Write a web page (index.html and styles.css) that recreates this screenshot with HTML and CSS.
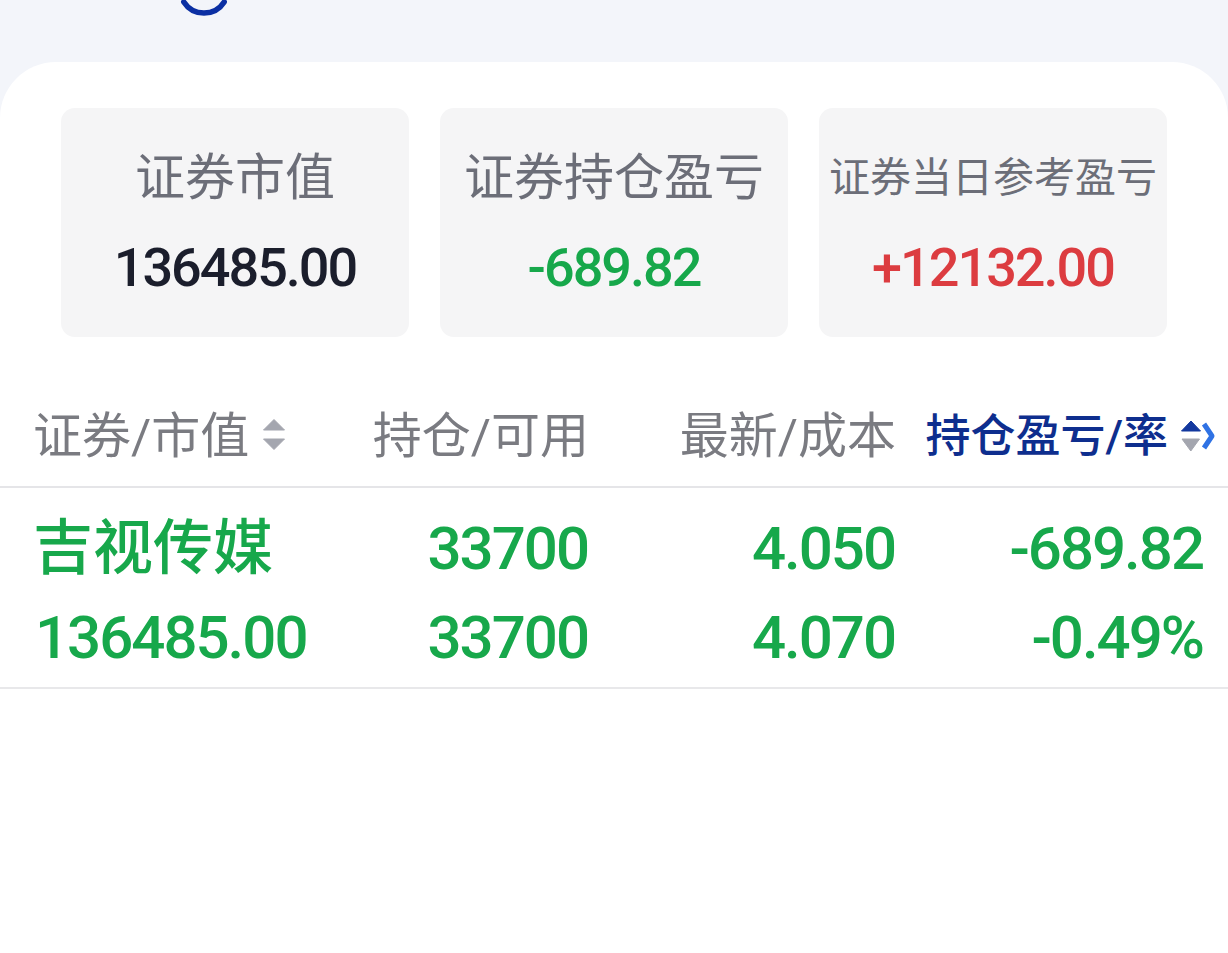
FILE: index.html
```html
<!DOCTYPE html>
<html lang="zh-CN">
<head>
<meta charset="utf-8">
<title>持仓</title>
<link rel="stylesheet" href="styles.css">
</head>
<body>
<header class="top">
  <svg class="top-arc" width="60" height="20" viewBox="0 0 60 20"><path d="M9.8 2 A24 24 0 0 0 50.2 2" fill="none" stroke="#0b2fa3" stroke-width="5.5" stroke-linecap="round"/></svg>
</header>
<main class="panel">
  <section class="stats">
    <div class="stat">
      <div class="stat-label">证券市值</div>
      <div class="stat-value">136485.00</div>
    </div>
    <div class="stat">
      <div class="stat-label">证券持仓盈亏</div>
      <div class="stat-value down">-689.82</div>
    </div>
    <div class="stat">
      <div class="stat-label small">证券当日参考盈亏</div>
      <div class="stat-value up">+12132.00</div>
    </div>
  </section>
  <section class="table">
    <div class="thead">
      <div class="th th-first">证券/市值<svg class="sort" width="22" height="31" viewBox="0 0 22 31"><path d="M11 0.5 L21.5 11 L0.5 11 Z" fill="#a4a6af" stroke="#a4a6af" stroke-linejoin="round"/><path d="M0.5 20 L21.5 20 L11 30.5 Z" fill="#a4a6af" stroke="#a4a6af" stroke-linejoin="round"/></svg></div>
      <div class="th th-right">持仓/可用</div>
      <div class="th th-right">最新/成本</div>
      <div class="th th-active">持仓盈亏/率<svg class="sort-active" width="36" height="36" viewBox="0 0 36 36"><path d="M24 6 L32 18 L24 30" fill="none" stroke="#2f72e4" stroke-width="5" stroke-linejoin="round"/><path d="M11 3 L20.5 13 L1.5 13 Z" fill="#13389e" stroke="#13389e" stroke-linejoin="round"/><path d="M2 21 L19.5 21 L10.8 33 Z" fill="#a4a6af" stroke="#a4a6af" stroke-linejoin="round"/></svg></div>
    </div>
    <div class="trow">
      <div class="cell">
        <div class="name">吉视传媒</div>
        <div>136485.00</div>
      </div>
      <div class="cell right">
        <div>33700</div>
        <div>33700</div>
      </div>
      <div class="cell right">
        <div>4.050</div>
        <div>4.070</div>
      </div>
      <div class="cell right">
        <div>-689.82</div>
        <div>-0.49%</div>
      </div>
    </div>
  </section>
</main>
</body>
</html>
```
FILE: styles.css
```css
* { box-sizing: border-box; }
html, body { margin: 0; padding: 0; }
body {
  width: 1228px;
  height: 953px;
  overflow: hidden;
  background: #f3f5fa;
  font-family: Roboto, "Noto Sans CJK SC", sans-serif;
}
.top {
  height: 62px;
  padding-left: 174px;
}
.top-arc { display: block; }
.panel {
  background: #ffffff;
  border-radius: 56px 56px 0 0;
  height: 891px;
  padding-top: 46px;
}
.stats {
  display: grid;
  grid-template-columns: repeat(3, 348px);
  column-gap: 31px;
  padding: 0 61px;
}
.stat {
  background: #f5f5f6;
  border-radius: 14px;
  height: 229px;
  padding-top: 40px;
  display: flex;
  flex-direction: column;
  align-items: center;
}
.stat-label {
  font-size: 50px;
  line-height: 60px;
  color: #6c6e78;
  white-space: nowrap;
}
.stat-label.small { font-size: 41px; }
.stat-value {
  margin-top: 30px;
  font-size: 54px;
  line-height: 60px;
  font-weight: 500;
  letter-spacing: -2px;
  color: #1b1e2c;
}
.stat-value.down { color: #17a84b; }
.stat-value.up { color: #dc3c40; }

.table { margin-top: 50px; }
.thead, .trow {
  display: grid;
  grid-template-columns: 275px 278px 307px 308px;
  padding: 0 25px 0 33px;
}
.thead {
  height: 101px;
  border-bottom: 2px solid #e5e5e8;
}
.th {
  display: flex;
  align-items: center;
  font-size: 49px;
  line-height: 99px;
  color: #7a7b81;
  white-space: nowrap;
}
.th svg { flex-shrink: 0; display: block; }
.th-right { justify-content: flex-end; margin-right: -3px; }
.th-first .sort { margin-left: 14px; margin-top: -4px; }
.th-active {
  justify-content: flex-end;
  margin-right: -15px;
  font-size: 45px;
  font-weight: 500;
  color: #0e2e8e;
}
.th-active .sort-active { margin-left: 12px; margin-top: -2px; }

.trow {
  padding-top: 16px;
  padding-left: 35px;
  height: 201px;
  border-bottom: 2px solid #e8e8ea;
  color: #17a84b;
  font-size: 60px;
  line-height: 89px;
  font-weight: 500;
}
.cell { white-space: nowrap; letter-spacing: -2px; }
.cell.right { text-align: right; }
.name { letter-spacing: 0; margin-left: -2px; }
```
